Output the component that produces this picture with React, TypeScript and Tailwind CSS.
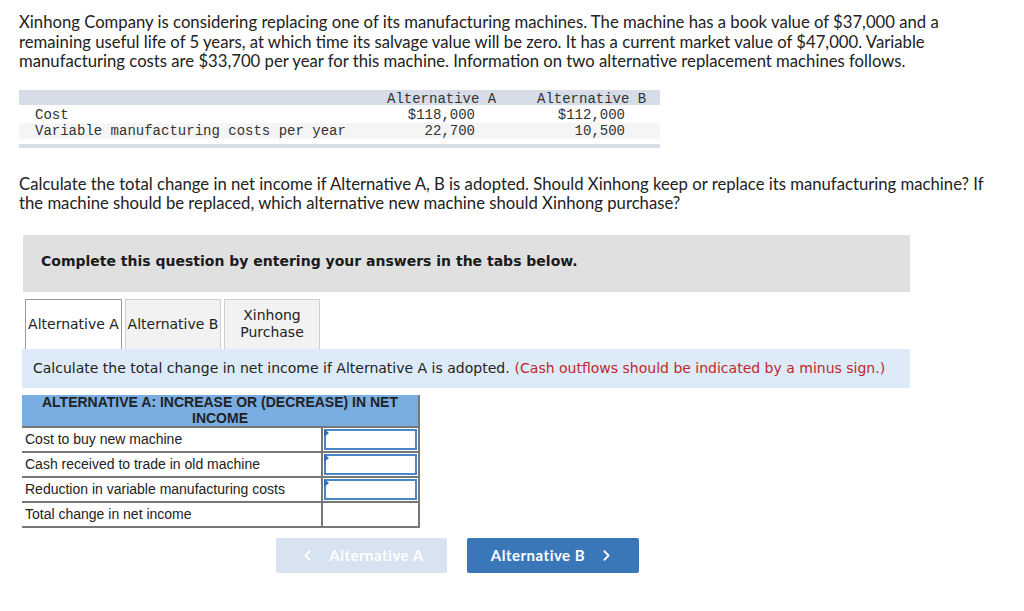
import { ChevronLeft, ChevronRight } from "lucide-react";

const rows = [
  { label: "Cost to buy new machine", input: true },
  { label: "Cash received to trade in old machine", input: true },
  { label: "Reduction in variable manufacturing costs", input: true },
  { label: "Total change in net income", input: false },
];

function InputCell({ active }: { active: boolean }) {
  if (!active) return <div className="h-full w-full" />;
  return (
    <div className="relative h-full w-full p-[1px]">
      <div className="h-full w-full border-2 border-[#4a86c5] bg-white" />
      <span className="absolute left-[1px] top-[1px] h-0 w-0 border-y-[4px] border-l-[5px] border-y-transparent border-l-[#2f6db5]" />
    </div>
  );
}

export default function App() {
  return (
    <div className="min-h-[611px] w-[1024px] bg-white text-[#222] [font-family:Lato,'Open_Sans',sans-serif]">
      <div className="px-[19px] pt-[13px]">
        <p className="whitespace-nowrap text-[16.7px] leading-[19.5px]">
          Xinhong Company is considering replacing one of its manufacturing machines. The machine has a book value of $37,000 and a
          <br />
          remaining useful life of 5 years, at which time its salvage value will be zero. It has a current market value of $47,000. Variable
          <br />
          manufacturing costs are $33,700 per year for this machine. Information on two alternative replacement machines follows.
        </p>

        <div className="mt-[18px] w-[641px] text-[14px] leading-[16px] text-[#333] [font-family:'Liberation_Mono',monospace]">
          <div className="grid h-[15px] grid-cols-[368px_150px_123px] bg-[#d6dde8]">
            <div />
            <div className="pt-[1px]">Alternative A</div>
            <div className="pt-[1px]">Alternative B</div>
          </div>
          <div className="grid grid-cols-[368px_150px_123px] bg-white pt-[2px]">
            <div className="pl-[16px]">Cost</div>
            <div className="pr-[62px] text-right">$118,000</div>
            <div className="pr-[35px] text-right">$112,000</div>
          </div>
          <div className="grid grid-cols-[368px_150px_123px] bg-[#f5f5f5]">
            <div className="pl-[16px]">Variable manufacturing costs per year</div>
            <div className="pr-[62px] text-right">22,700</div>
            <div className="pr-[35px] text-right">10,500</div>
          </div>
          <div className="mt-[5px] h-[4px] bg-[#d6dde8]" />
        </div>

        <p className="mt-[27px] whitespace-nowrap text-[16.7px] leading-[19px]">
          Calculate the total change in net income if Alternative A, B is adopted. Should Xinhong keep or replace its manufacturing machine? If
          <br />
          the machine should be replaced, which alternative new machine should Xinhong purchase?
        </p>
      </div>

      <div className="ml-[23px] mt-[22px] h-[57px] w-[887px] bg-[#e0e0e0] pl-[18px] pt-[13px]">
        <span className="text-[14px] font-bold text-[#1a1a1a] [font-family:'DejaVu_Sans',Verdana,sans-serif]">
          Complete this question by entering your answers in the tabs below.
        </span>
      </div>

      <div className="ml-[25px] mt-[7px] flex gap-[3px] text-[14px] leading-[17px] text-[#222] [font-family:'DejaVu_Sans',Verdana,sans-serif]">
        <div className="flex h-[50px] w-[97px] items-center justify-center border-x border-t border-[#9a9a9a] bg-white">
          Alternative A
        </div>
        <div className="flex h-[50px] w-[96px] items-center justify-center border-x border-t border-[#cfcfcf] bg-[#f2f2f2]">
          Alternative B
        </div>
        <div className="flex h-[50px] w-[96px] items-center justify-center border-x border-t border-[#cfcfcf] bg-[#f2f2f2] text-center">
          Xinhong
          <br />
          Purchase
        </div>
      </div>

      <div className="ml-[22px] flex h-[39px] w-[888px] items-center whitespace-nowrap bg-[#dcebf7] pl-[11px] text-[14px] [font-family:'DejaVu_Sans',Verdana,sans-serif]">
        <span className="text-[#222]">Calculate the total change in net income if Alternative A is adopted.</span>
        <span className="ml-[5px] text-[#c0272d]">(Cash outflows should be indicated by a minus sign.)</span>
      </div>

      <div className="ml-[22px] mt-[7px] w-[398px] text-[14px] text-[#222] [font-family:'Liberation_Sans',Arial,sans-serif]">
        <div className="flex h-[33px] items-center justify-center border-r-2 border-b-2 border-[#777] bg-[#7aaee2] px-2 text-center font-bold leading-[16px] text-[#222]">
          ALTERNATIVE A: INCREASE OR (DECREASE) IN NET INCOME
        </div>
        {rows.map((r) => (
          <div key={r.label} className="flex h-[25px] border-b-2 border-[#777]">
            <div className="flex flex-1 items-center border-r-2 border-[#777] pl-[3px]">{r.label}</div>
            <div className="w-[97px] border-r-2 border-[#777]">
              <InputCell active={r.input} />
            </div>
          </div>
        ))}
      </div>

      <div className="mt-[10px] flex gap-[20px] pl-[276px] text-[15px] font-bold tracking-[0.5px] text-white [font-family:Lato,'Open_Sans',sans-serif]">
        <button className="flex h-[35px] w-[171px] items-center justify-center gap-[13px] rounded-[2px] bg-[#d7e3f1]">
          <ChevronLeft className="h-[17px] w-[17px]" strokeWidth={2.5} />
          Alternative A
        </button>
        <button className="flex h-[35px] w-[172px] items-center justify-center gap-[13px] rounded-[2px] bg-[#3a77b9]">
          Alternative B
          <ChevronRight className="h-[17px] w-[17px]" strokeWidth={2.5} />
        </button>
      </div>
    </div>
  );
}
